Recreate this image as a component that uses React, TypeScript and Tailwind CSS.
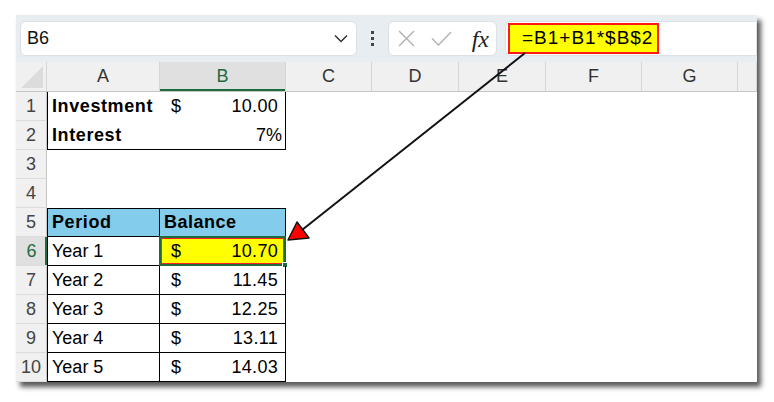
import React from 'react';

const font = { fontFamily: '"Liberation Sans", Arial, sans-serif' };

const cols = ['A', 'B', 'C', 'D', 'E', 'F', 'G', ''];

type Row = {
  a?: string;
  b?: string;
  cur?: boolean;
  aBold?: boolean;
  bBold?: boolean;
  aCls?: string;
  bCls?: string;
};

const rows: Row[] = [
  { a: 'Investment', b: '10.00', cur: true, aBold: true, aCls: 'border-l border-black', bCls: 'border-r border-black' },
  { a: 'Interest', b: '7%', aBold: true, aCls: 'border-l border-b border-black', bCls: 'border-r border-b border-black' },
  {},
  {},
  { a: 'Period', b: 'Balance', aBold: true, bBold: true, aCls: 'border border-black bg-[#83cceb]', bCls: 'border-t border-r border-b border-black bg-[#83cceb]' },
  { a: 'Year 1', b: '10.70', cur: true, aCls: 'border-l border-b border-r border-black', bCls: 'border-r border-b border-black' },
  { a: 'Year 2', b: '11.45', cur: true, aCls: 'border-l border-b border-r border-black', bCls: 'border-r border-b border-black' },
  { a: 'Year 3', b: '12.25', cur: true, aCls: 'border-l border-b border-r border-black', bCls: 'border-r border-b border-black' },
  { a: 'Year 4', b: '13.11', cur: true, aCls: 'border-l border-b border-r border-black', bCls: 'border-r border-b border-black' },
  { a: 'Year 5', b: '14.03', cur: true, aCls: 'border-l border-b border-r border-black', bCls: 'border-r border-b border-black' },
];

const gridCols = 'grid grid-cols-[31px_113px_126px_86px_87px_87px_96px_96px_1fr]';

function BCell({ row, idx }: { row: Row; idx: number }) {
  const selected = idx === 5;
  if (!row.b) return <div className="h-[29px]" />;
  const isText = row.b === 'Balance';
  return (
    <div
      className={`relative h-[29px] flex items-center text-[18px] text-black ${row.bCls ?? ''} ${
        selected ? 'bg-[#ffff00]' : ''
      } ${row.bBold ? 'font-bold tracking-[0.5px]' : 'tracking-[0.3px]'}`}
    >
      {isText ? (
        <span className="pl-[4px]">{row.b}</span>
      ) : (
        <>
          {row.cur && <span className="pl-[11px]">$</span>}
          <span className={`ml-auto ${row.b.endsWith('%') ? 'pr-[3px] tracking-normal' : 'pr-[7px]'}`}>{row.b}</span>
        </>
      )}
      {selected && (
        <>
          <div className="absolute -inset-px border-2 border-[#1e6b40] pointer-events-none" />
          <div className="absolute inset-[1px] border border-[#ff2020] pointer-events-none" />
          <div className="absolute -right-[3px] -bottom-[3px] w-[6px] h-[6px] bg-[#1e6b40] border border-white" />
        </>
      )}
    </div>
  );
}

export default function App() {
  return (
    <div className="relative w-[774px] h-[402px] bg-white overflow-hidden" style={font}>
      <div className="absolute left-[16px] top-[15px] w-[741px] h-[367px] bg-white flex flex-col shadow-[4px_5px_5px_rgba(0,0,0,0.65)] overflow-hidden">
        {/* formula bar */}
        <div className="h-[47px] bg-[#e8edf1] flex items-center pl-[4px]">
          <div className="w-[337px] h-[35px] bg-white rounded-[6px] border border-[#dde1e5] flex items-center pl-[6px] pr-[8px]">
            <span className="text-[18px] text-[#111]">B6</span>
            <svg className="ml-auto" width="14" height="9" viewBox="0 0 14 9">
              <path d="M1 1.5 L7 7.5 L13 1.5" fill="none" stroke="#333" strokeWidth="1.5" />
            </svg>
          </div>
          <div className="w-[31px] flex flex-col items-center gap-[3px]">
            <div className="w-[3px] h-[3px] bg-[#444]" />
            <div className="w-[3px] h-[3px] bg-[#444]" />
            <div className="w-[3px] h-[3px] bg-[#444]" />
          </div>
          <div className="w-[109px] h-[35px] bg-white rounded-[6px] border border-[#dde1e5] flex items-center pl-[9px] pr-[7px]">
            <svg width="17" height="17" viewBox="0 0 17 17">
              <path d="M1 1 L16 16 M16 1 L1 16" stroke="#b4b4b4" strokeWidth="1.5" />
            </svg>
            <svg className="ml-[16px]" width="21" height="15" viewBox="0 0 21 15">
              <path d="M1 7.5 L7.5 14 L20 1" fill="none" stroke="#b4b4b4" strokeWidth="1.5" />
            </svg>
            <span
              className="ml-auto text-[24px] italic text-[#222] leading-none"
              style={{ fontFamily: '"Liberation Serif", "DejaVu Serif", serif' }}
            >
              fx
            </span>
          </div>
          <div className="ml-[8px] flex-1 h-[35px] bg-white border border-[#dde1e5] rounded-l-[6px] flex items-center pl-[2px]">
            <div className="h-[31px] w-[151px] bg-[#ffff00] border-2 border-[#ff1a1a] flex items-center pl-[12px] text-[19px] tracking-[1px] text-black">
              =B1+B1*$B$2
            </div>
          </div>
        </div>

        {/* column headers */}
        <div className={`${gridCols} h-[30px] bg-[#f0f0f0] border-b border-[#c6c6c6]`}>
          <div className="relative border-r border-[#d6d6d6]">
            <svg className="absolute right-[3px] bottom-[3px]" width="22" height="22" viewBox="0 0 22 22">
              <polygon points="22,0 22,22 0,22" fill="#dcdcdc" />
            </svg>
          </div>
          {cols.map((c) => (
            <div
              key={c || 'x'}
              className={`flex items-center justify-center text-[18px] border-r border-[#d6d6d6] ${
                c === 'B' ? 'bg-[#e0e0e0] text-[#1e6b40] shadow-[inset_0_-2px_0_#1e6b40]' : 'text-[#333]'
              }`}
            >
              {c}
            </div>
          ))}
        </div>

        {/* rows */}
        {rows.map((row, i) => (
          <div key={i} className={gridCols}>
            <div
              className={`h-[29px] flex items-center justify-center text-[18px] border-b border-[#dcdcdc] ${
                i === 5
                  ? 'bg-[#e0e0e0] text-[#1e6b40] shadow-[inset_-2px_0_0_#1e6b40]'
                  : 'bg-[#f0f0f0] text-[#444] border-r border-r-[#c6c6c6]'
              }`}
            >
              {i + 1}
            </div>
            <div
              className={`h-[29px] flex items-center pl-[4px] text-[18px] text-black ${row.aCls ?? ''} ${
                row.aBold ? 'font-bold tracking-[0.6px]' : ''
              }`}
            >
              {row.a}
            </div>
            <BCell row={row} idx={i} />
            <div />
            <div />
            <div />
            <div />
            <div />
            <div />
          </div>
        ))}
      </div>

      {/* callout arrow */}
      <svg className="absolute left-0 top-0 pointer-events-none" width="774" height="402" viewBox="0 0 774 402">
        <line x1="525" y1="53" x2="302" y2="230" stroke="#111" strokeWidth="2" />
        <polygon points="288,240 297,222 309,238" fill="#ff0000" stroke="#111" strokeWidth="1.5" strokeLinejoin="round" />
      </svg>
    </div>
  );
}
